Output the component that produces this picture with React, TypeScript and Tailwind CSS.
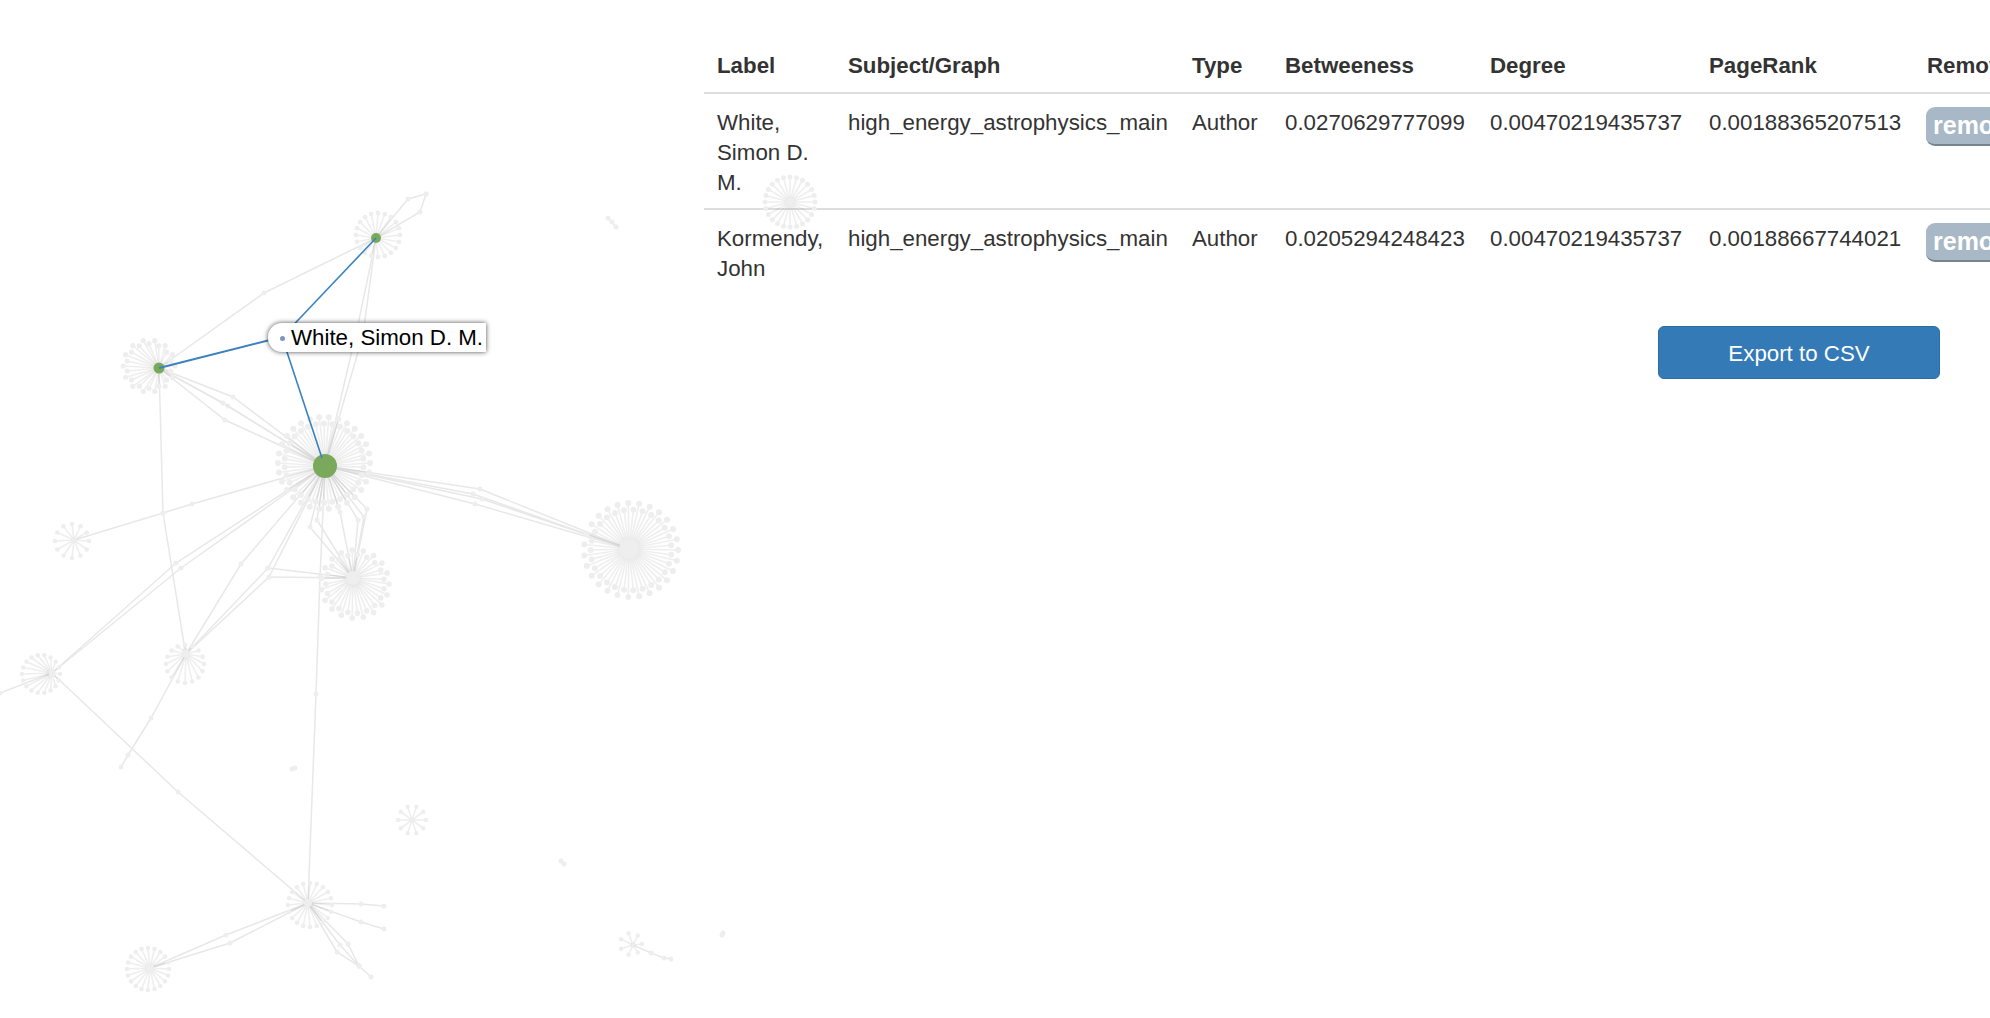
const EDGE = "#e8e8e8";
const LEAF = "#eeeeee";
const GREEN = "#7aa95c";
const BLUE = "#3a82c0";

type Pt = [number, number];

const A: Pt = [325, 466];
const B: Pt = [376, 238];
const C: Pt = [159, 368];
const D: Pt = [629, 549];
const E: Pt = [353, 578];
const F: Pt = [74, 540];
const G: Pt = [186, 654];
const H: Pt = [52, 673];
const I: Pt = [308, 903];
const J: Pt = [150, 968];

// chains of edges, every inner point gets a small dot
const paths: Pt[][] = [
  [B, [408, 199], [426, 194]],
  [B, [420, 212], [426, 194]],
  [B, [264, 293], C],
  [C, [233, 397], A],
  [C, [228, 406], A],
  [C, [223, 403], A],
  [C, [225, 420], A],
  [B, [358, 325], A],
  [B, [363, 335], A],
  [A, [192, 504], [163, 513], F],
  [C, [163, 513], [185, 650], G],
  [A, [176, 563], H],
  [A, [181, 568], H],
  [A, [241, 564], G],
  [A, [268, 568], G],
  [A, [269, 577], G],
  [E, [268, 568]],
  [E, [269, 577]],
  [A, [367, 509], E],
  [A, [364, 517], E],
  [A, [310, 527], E],
  [A, [317, 520], E],
  [A, [340, 512], E],
  [A, [358, 520], E],
  [A, [480, 489], D],
  [A, [473, 494], D],
  [A, [482, 499], D],
  [A, [475, 504], D],
  [A, [320, 577], [316, 694], I],
  [H, [178, 792], I],
  [G, [151, 718], [128, 755], [121, 767]],
  [H, [0, 693]],
  [J, [226, 935], I],
  [J, [230, 943], I],
  [I, [361, 904], [384, 906]],
  [I, [361, 922], [384, 929]],
  [I, [340, 945], [359, 966]],
  [I, [348, 944], [359, 966]],
  [I, [337, 952], [359, 966], [371, 977]],
  [[633, 945], [651, 953], [664, 958], [671, 959]],
  [[608, 218], [612, 222], [616, 227]],
  [[292, 769], [295, 768]],
  [[561, 861], [564, 864]],
  [[723, 933], [722, 935]],
];

const bursts = [
  { hub: A, ring: [324, 463], r: 46, n: 60, hubR: 12, fill: GREEN, leaf: 3 },
  { hub: B, ring: [378, 235], r: 22, n: 20, hubR: 5, fill: GREEN, leaf: 2.4 },
  { hub: C, ring: [149, 366], r: 26, n: 28, hubR: 5.5, fill: GREEN, leaf: 2.6 },
  { hub: D, ring: [631, 550], r: 47, n: 54, hubR: 10, fill: LEAF, leaf: 3 },
  { hub: E, ring: [355, 584], r: 34, n: 38, hubR: 7, fill: LEAF, leaf: 2.8 },
  { hub: F, ring: [72, 541], r: 17, n: 12, hubR: 3, fill: LEAF, leaf: 2.3 },
  { hub: G, ring: [185, 664], r: 19, n: 16, hubR: 4, fill: LEAF, leaf: 2.3 },
  { hub: H, ring: [41, 674], r: 19, n: 18, hubR: 3.5, fill: LEAF, leaf: 2.3 },
  { hub: I, ring: [310, 905], r: 22, n: 20, hubR: 4, fill: LEAF, leaf: 2.3 },
  { hub: J, ring: [148, 969], r: 21, n: 20, hubR: 4, fill: LEAF, leaf: 2.3 },
  { hub: [412, 820], ring: [412, 820], r: 14, n: 10, hubR: 2, fill: LEAF, leaf: 2.2 },
  { hub: [633, 945], ring: [631, 944], r: 11, n: 7, hubR: 2, fill: LEAF, leaf: 2.2 },
  { hub: [790, 202], ring: [790, 202], r: 25, n: 24, hubR: 4, fill: LEAF, leaf: 2.5 },
];

const Burst = ({ b }: { b: (typeof bursts)[number] }) => {
  const leaves = Array.from({ length: b.n }, (_, i) => {
    const a = (i / b.n) * Math.PI * 2;
    const r = b.n > 25 && i % 2 ? b.r * 0.86 : b.r;
    return [b.ring[0] + Math.cos(a) * r, b.ring[1] + Math.sin(a) * r];
  });
  return (
    <g>
      {leaves.map((p, i) => (
        <line
          key={i}
          x1={b.hub[0]}
          y1={b.hub[1]}
          x2={p[0]}
          y2={p[1]}
          stroke="#000"
          strokeOpacity={0.065}
          strokeWidth={1.6}
        />
      ))}
      {leaves.map((p, i) => (
        <circle key={i} cx={p[0]} cy={p[1]} r={b.leaf} fill={LEAF} />
      ))}
      <circle cx={b.hub[0]} cy={b.hub[1]} r={b.hubR} fill={b.fill} />
    </g>
  );
};

const Graph = () => (
  <svg
    className="absolute top-0 left-0 pointer-events-none blur-[0.4px]"
    width={1990}
    height={1018}
    viewBox="0 0 1990 1018"
  >
    {paths.map((p, i) => (
      <g key={i}>
        <polyline
          points={p.map((q) => q.join(",")).join(" ")}
          fill="none"
          stroke={EDGE}
          strokeWidth={1.5}
        />
        {p.map((q, j) => (
          <circle key={j} cx={q[0]} cy={q[1]} r={2.5} fill={LEAF} />
        ))}
      </g>
    ))}
    {bursts.map((b, i) => (
      <Burst key={i} b={b} />
    ))}
    <line x1={376} y1={238} x2={282} y2={337} stroke={BLUE} strokeWidth={1.6} />
    <line x1={159} y1={368} x2={282} y2={337} stroke={BLUE} strokeWidth={2} />
    <line x1={282} y1={337} x2={322} y2={458} stroke={BLUE} strokeWidth={1.6} />
  </svg>
);

const rows = [
  {
    label: "White, Simon D. M.",
    betweeness: "0.0270629777099",
    degree: "0.00470219435737",
    pagerank: "0.00188365207513",
  },
  {
    label: "Kormendy, John",
    betweeness: "0.0205294248423",
    degree: "0.00470219435737",
    pagerank: "0.00188667744021",
  },
];

const App = () => {
  return (
    <div className="relative w-[1990px] h-[1018px] overflow-hidden bg-white font-['Liberation_Sans',Arial,sans-serif] text-[22.3px] leading-[30px] text-[#333333]">
      <div className="flex">
        <div className="w-[704px] shrink-0" />
        <div className="pt-[36px]">
          <table className="table-fixed w-[1330px] border-collapse text-left">
            <colgroup>
              <col className="w-[131px]" />
              <col className="w-[344px]" />
              <col className="w-[93px]" />
              <col className="w-[205px]" />
              <col className="w-[219px]" />
              <col className="w-[218px]" />
              <col className="w-[120px]" />
            </colgroup>
            <thead>
              <tr className="border-b-[2px] border-[#dddddd]">
                {["Label", "Subject/Graph", "Type", "Betweeness", "Degree", "PageRank", "Remove"].map((h) => (
                  <th key={h} className="pl-[13px] pr-[11px] pt-[15px] pb-[11px] font-bold whitespace-nowrap overflow-hidden">
                    {h}
                  </th>
                ))}
              </tr>
            </thead>
            <tbody>
              {rows.map((r, i) => (
                <tr key={i} className={i === 0 ? "border-b-[2px] border-[#dddddd]" : ""}>
                  <td className="pl-[13px] pr-[11px] pt-[14px] pb-[10px] align-top">{r.label}</td>
                  <td className="pl-[13px] pr-[11px] pt-[14px] pb-[10px] align-top">high_energy_astrophysics_main</td>
                  <td className="pl-[13px] pr-[11px] pt-[14px] pb-[10px] align-top">Author</td>
                  <td className="pl-[13px] pr-[11px] pt-[14px] pb-[10px] align-top">{r.betweeness}</td>
                  <td className="pl-[13px] pr-[11px] pt-[14px] pb-[10px] align-top">{r.degree}</td>
                  <td className="pl-[13px] pr-[11px] pt-[14px] pb-[10px] align-top">{r.pagerank}</td>
                  <td className="pl-[12px] pr-[11px] pt-[13px] pb-[9px] align-top">
                    <div className="w-[110px] h-[39px] rounded-[9px] bg-[#a8b8c6] border-b-[2px] border-[#75848f] pl-[7px] text-[25px] leading-[36px] font-bold text-white">
                      remove
                    </div>
                  </td>
                </tr>
              ))}
            </tbody>
          </table>
          <button className="ml-[954px] mt-[32px] w-[282px] h-[53px] pt-[2px] rounded-[6px] bg-[#337ab7] border border-[#2e6da4] text-white text-center">
            Export to CSV
          </button>
        </div>
      </div>
      <Graph />
      <div className="absolute left-[268px] top-[323px] w-[218px] h-[29px] pt-[1px] flex items-center rounded-l-[14px] bg-white shadow-[0_0_5px_rgba(0,0,0,0.7)] text-black text-[22.3px] leading-none whitespace-nowrap">
        <span className="ml-[12px] mr-[6px] w-[5px] h-[5px] rounded-full bg-[#7c94c8] shrink-0" />
        White, Simon D. M.
      </div>
    </div>
  );
};

export default App;
